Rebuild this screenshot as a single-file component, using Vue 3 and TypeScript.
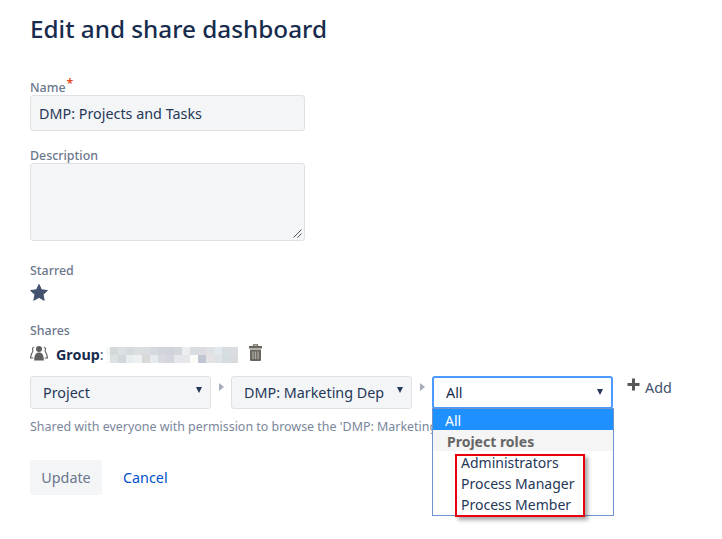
<script setup lang="ts">
const mosaicRows: string[][] = [
  ['#f6f7f7','#d3d8d9','#dbdfe4','#d5dade','#dcdfe0','#d8dde2','#d6dae0','#d3d5dc','#d0d3d9','#d3d6da','#ecedee','#d8dde2','#dcdce2','#e0e1e3','#e1e9ef','#d8dde0','#d9dce0'],
  ['#fafafa','#dde1e3','#d3d7da','#e9edef','#eef1f1','#d8d9d9','#e5ebee','#d9dadf','#d3d6de','#e5e7ea','#e5e7ea','#fbfbf9','#c2c5d2','#e6e3e7','#e0e3e5','#d4dde2','#d8dade'],
]
const options = ['Administrators', 'Process Manager', 'Process Member']
</script>

<template>
  <main class="page">
    <h1 class="title">Edit and share dashboard</h1>

    <section class="field name-field">
      <label class="label">Name<span class="req">*</span></label>
      <div class="input">DMP: Projects and Tasks</div>
    </section>

    <section class="field desc-field">
      <label class="label">Description</label>
      <div class="textarea">
        <svg class="grip" width="9" height="9" viewBox="0 0 9 9">
          <path d="M0.5 8.5 L8.5 0.5 M4.5 8.5 L8.5 4.5" stroke="#555" stroke-width="1" fill="none" />
        </svg>
      </div>
    </section>

    <section class="field starred">
      <label class="label">Starred</label>
      <svg class="star" width="18" height="17" viewBox="0 0 18 17">
        <path d="M9 0.5 L11.5 5.8 L17.4 6.5 L13 10.5 L14.2 16.3 L9 13.4 L3.8 16.3 L5 10.5 L0.6 6.5 L6.5 5.8 Z" fill="#42526e" stroke="#42526e" stroke-linejoin="round" />
      </svg>
    </section>

    <section class="field shares">
      <label class="label">Shares</label>
      <div class="group-row">
        <svg class="group-icon" width="18" height="15" viewBox="0 0 18 15">
          <circle cx="9" cy="3" r="3" fill="#5f5f5f" />
          <path d="M4.2 14.5 C4.2 9 5.800 6.500 9 6.500 C12.200 6.500 13.800 9 13.800 14.500 Z" fill="#5f5f5f" />
          <path d="M4.200 1.200 C2.600 1.200 2 3.400 3 5 C2 6.500 0.800 9 0.500 12 L3.300 12 M13.800 1.200 C15.400 1.200 16 3.400 15 5 C16 6.500 17.200 9 17.500 12 L14.700 12" fill="none" stroke="#5f5f5f" stroke-width="1.100" />
        </svg>
        <strong class="group-name">Group</strong><span class="colon">:</span>
        <div class="mosaic" aria-hidden="true">
          <div v-for="(row, r) in mosaicRows" :key="r" class="mosaic-row">
            <i v-for="(c, i) in row" :key="i" :style="{ background: c }"></i>
          </div>
        </div>
        <svg class="trash" width="13" height="17" viewBox="0 0 13 17">
          <path d="M4.500 2 V0.800 H8.500 V2" fill="none" stroke="#6b675f" stroke-width="1.200" />
          <path d="M0 2 H13 V4.500 H0 Z" fill="#6b675f" />
          <path d="M1 5.500 H12 V16 Q12 17 11 17 H2 Q1 17 1 16 Z" fill="#6b675f" />
          <path d="M4 7.500 V15 M6.500 7.500 V15 M9 7.500 V15" stroke="#aaa9a4" stroke-width="1.300" />
        </svg>
      </div>

      <div class="select-row">
        <div class="select"><span>Project</span><i class="arrow"></i></div>
        <i class="sep"></i>
        <div class="select"><span>DMP: Marketing Dep</span><i class="arrow"></i></div>
        <i class="sep"></i>
        <div class="dropdown-wrap">
          <div class="select focused"><span>All</span><i class="arrow"></i></div>
          <div class="menu">
            <div class="opt-active">All</div>
            <div class="opt-group">Project roles</div>
            <div v-for="o in options" :key="o" class="opt">{{ o }}</div>
          </div>
          <div class="highlight"></div>
        </div>
        <div class="add">
          <svg width="13" height="13" viewBox="0 0 13 13">
            <path d="M5 0.500 H8 V5 H12.500 V8 H8 V12.500 H5 V8 H0.500 V5 H5 Z" fill="#595959" />
          </svg>
          <span>Add</span>
        </div>
      </div>
      <p class="help">Shared with everyone with permission to browse the 'DMP: Marketing</p>
    </section>

    <div class="actions">
      <button class="update" type="button">Update</button>
      <a class="cancel">Cancel</a>
    </div>
  </main>
</template>

<style>
html, body { margin: 0; background: #fff; overflow: hidden; }
</style>

<style scoped>
.page {
  width: 722px;
  height: 539px;
  box-sizing: border-box;
  padding: 13px 0 0 30px;
  font-family: "Noto Sans", "Open Sans", sans-serif;
  color: #172b4d;
  overflow: hidden;
}
.title {
  margin: 0;
  font-size: 24.3px;
  line-height: 32px;
  font-weight: 500;
  color: #172b4d;
}
.field { display: flex; flex-direction: column; align-items: flex-start; }
.name-field { margin-top: 33px; }
.desc-field { margin-top: 15px; }
.starred { margin-top: 20px; }
.shares { margin-top: 20px; }
.label {
  font-size: 12.4px;
  line-height: 20px;
  height: 17px;
  font-weight: 500;
  color: #6b778c;
}
.req { color: #de350b; position: relative; top: -4px; margin-left: 1px; }
.input, .textarea {
  box-sizing: border-box;
  width: 275px;
  background: #f4f5f7;
  border: 1px solid #dfe1e6;
  border-radius: 3px;
}
.input {
  height: 36px;
  padding: 0 8px;
  font-size: 14.35px;
  line-height: 35px;
  color: #253858;
}
.textarea { position: relative; height: 78px; }
.grip { position: absolute; right: 2px; bottom: 2px; }
.star { margin-top: 6px; }
.group-row { display: flex; align-items: center; height: 26px; margin-top: 3px; }
.group-icon { margin: -2px 8px 0 0; }
.group-name { font-size: 14.3px; font-weight: 700; }
.colon { font-size: 14.3px; color: #42526e; }
.mosaic { margin: 2px 0 0 2px; display: flex; flex-direction: column; }
.mosaic-row { display: flex; height: 8px; }
.mosaic-row i { display: block; width: 8px; }
.mosaic-row i:first-child { width: 4px; }
.trash { margin: -4px 0 0 11px; }
.select-row { display: flex; align-items: flex-start; margin-top: 9px; }
.select {
  box-sizing: border-box;
  width: 181px;
  height: 33px;
  padding: 0 12px;
  background: #f4f5f7;
  border: 1px solid #dfe1e6;
  border-radius: 3px;
  display: flex;
  align-items: center;
  justify-content: space-between;
  font-size: 14.35px;
  color: #253858;
  white-space: nowrap;
}
.select:not(.focused) { padding-right: 8px; }
.select:not(.focused) .arrow { margin-top: -5px; }
.arrow {
  width: 0;
  height: 0;
  border-left: 3.500px solid transparent;
  border-right: 3.500px solid transparent;
  border-top: 6px solid #253858;
}
.sep {
  width: 0;
  height: 0;
  margin: 7px 7px 0 8px;
  border-top: 4.500px solid transparent;
  border-bottom: 4.500px solid transparent;
  border-left: 5px solid #a5adba;
}
.dropdown-wrap { position: relative; width: 181px; }
.focused {
  background: #fff;
  border: 2px solid #4c9aff;
  padding: 0 8px 0 13px;
  color: #172b4d;
}
.focused .arrow { margin-top: -2px; }
.focused span { margin-left: -1px; }
.menu {
  position: absolute;
  top: 32px;
  left: 0;
  width: 182px;
  height: 108px;
  box-sizing: border-box;
  background: #fff;
  border: 1px solid #6e93cf;
  font-size: 14px;
  line-height: 20px;
  color: #253858;
  z-index: 2;
}
.menu > div { box-sizing: border-box; height: 21px; padding-top: 2px; }
.opt-active { background: #1e90ff; color: #fff; padding-left: 12px; }
.opt-group { background: #f5f5f5; color: #666; font-weight: 700; padding-left: 14px; }
.opt { padding-left: 28px; }
.highlight {
  position: absolute;
  top: 78px;
  left: 23px;
  width: 130px;
  height: 63px;
  box-sizing: border-box;
  border: 2px solid #e8000c;
  box-shadow: 3px 3px 4px rgba(0, 0, 0, 0.35);
  z-index: 3;
}
.add {
  margin-left: 14px;
  display: flex;
  align-items: center;
  gap: 5px;
  font-size: 14.35px;
  color: #42526e;
  height: 22px;
}
.add svg { margin-top: -5px; }
.help {
  margin: 9px 0 0;
  font-size: 12.45px;
  line-height: 18px;
  color: #7a869a;
  white-space: nowrap;
}
.actions { display: flex; align-items: center; margin-top: 24px; }
.update {
  width: 72px;
  height: 35px;
  border: 0;
  border-radius: 3px;
  background: #f4f5f7;
  color: #6b778c;
  font: inherit;
  font-size: 14.35px;
}
.cancel { margin-left: 21px; font-size: 14.35px; color: #0052cc; }
</style>
